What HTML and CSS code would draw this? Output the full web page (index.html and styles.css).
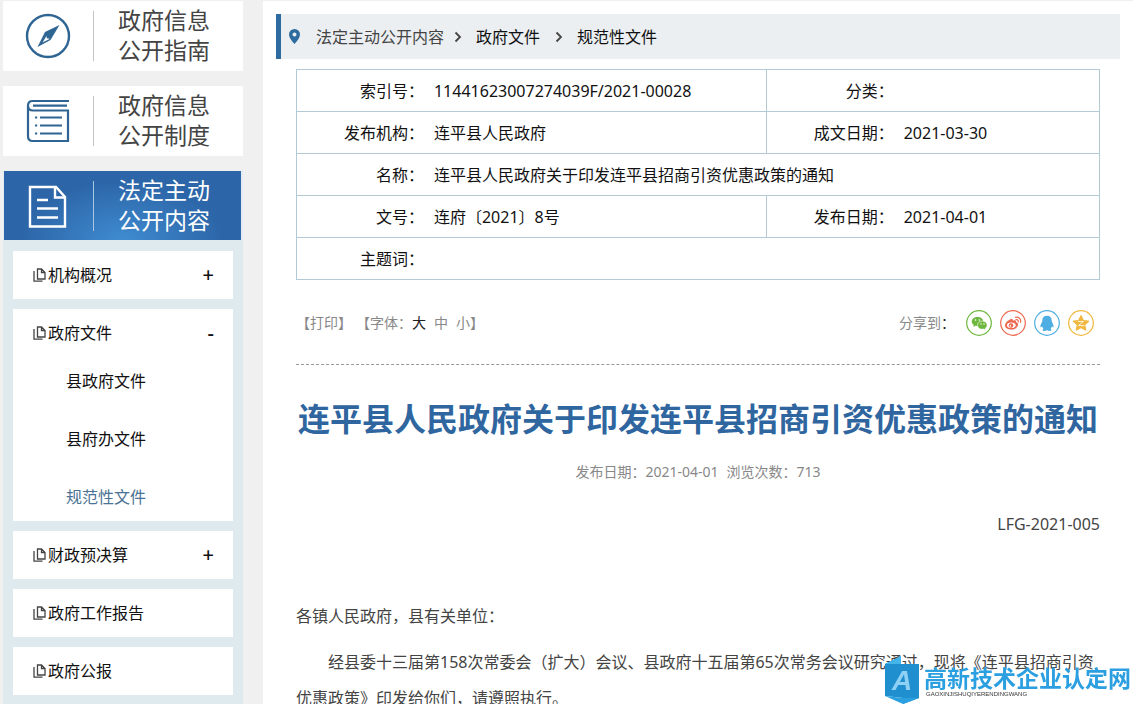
FILE: index.html
```
<!DOCTYPE html>
<html lang="zh-CN">
<head>
<meta charset="utf-8">
<meta name="viewport" content="width=device-width, initial-scale=1">
<title>连平县人民政府关于印发连平县招商引资优惠政策的通知</title>
<link rel="stylesheet" href="styles.css">
</head>
<body>
<svg class="defs" aria-hidden="true">
  <symbol id="pages" viewBox="0 0 13 14">
    <path d="M4.500 1h4L12 4.500V11H4.500zM8.500 1v3.500H12M1 3v10.200h8.500" fill="none" stroke="#444" stroke-width="1.300"/>
  </symbol>
  <symbol id="chevron" viewBox="0 0 8 12">
    <path d="M1.500 1.500 6 6l-4.500 4.500" fill="none" stroke="#444" stroke-width="1.800"/>
  </symbol>
</svg>
<div class="page">
  <aside class="sidebar">
    <a class="card" href="#">
      <span class="card-icon">
        <svg width="46" height="46" viewBox="0 0 46 46">
          <circle cx="23" cy="23" r="21" fill="none" stroke="#2f6593" stroke-width="2.400"/>
          <path d="M34.500 12 25.500 27 12.500 34 20 19z" fill="#2f6593"/>
          <path d="M17.500 29.500 21.500 23l3 3z" fill="#fff"/>
          <circle cx="23" cy="24" r="1.500" fill="#2f6593"/>
        </svg>
      </span>
      <span class="card-text">政府信息<br>公开指南</span>
    </a>
    <a class="card" href="#">
      <span class="card-icon">
        <svg width="46" height="46" viewBox="0 0 46 46" fill="none" stroke="#2f6593" stroke-width="2.200">
          <path d="M44 3H7.500C4.500 3 3 4.800 3 7.500V38c0 3.500 1.500 5 4.500 5H43V12.500H8C4.500 12.500 3 11 3 7.500"/>
          <path d="M8 7.700h34M15 19.500h22M15 27.500h22M15 35.500h22M10 19.500h2.200M10 27.500h2.200M10 35.500h2.200"/>
        </svg>
      </span>
      <span class="card-text">政府信息<br>公开制度</span>
    </a>
    <a class="card card-active" href="#">
      <span class="card-icon">
        <svg width="46" height="46" viewBox="0 0 46 46" fill="none" stroke="#fff" stroke-width="2.400">
          <path d="M5 4h26l9 10v29.500H5z"/>
          <path d="M30 4v10.500h10M12 17h11M12 25.500h21M12 34.500h21"/>
        </svg>
      </span>
      <span class="card-text">法定主动<br>公开内容</span>
    </a>
    <nav class="menu">
      <section class="menu-box">
        <button class="menu-head"><svg width="13" height="14"><use href="#pages"/></svg><span>机构概况</span><b class="sign">+</b></button>
      </section>
      <section class="menu-box">
        <button class="menu-head"><svg width="13" height="14"><use href="#pages"/></svg><span>政府文件</span><b class="sign">-</b></button>
        <div class="submenu">
          <a href="#">县政府文件</a>
          <a href="#">县府办文件</a>
          <a class="current" href="#">规范性文件</a>
        </div>
      </section>
      <section class="menu-box">
        <button class="menu-head"><svg width="13" height="14"><use href="#pages"/></svg><span>财政预决算</span><b class="sign">+</b></button>
      </section>
      <section class="menu-box">
        <a class="menu-head" href="#"><svg width="13" height="14"><use href="#pages"/></svg><span>政府工作报告</span></a>
      </section>
      <section class="menu-box">
        <a class="menu-head" href="#"><svg width="13" height="14"><use href="#pages"/></svg><span>政府公报</span></a>
      </section>
    </nav>
  </aside>
  <main class="main">
    <nav class="crumbs">
      <svg class="pin" width="11" height="15" viewBox="0 0 11 15"><path d="M5.500 0A5.500 5.500 0 0 0 0 5.500C0 9.500 5.500 15 5.500 15S11 9.500 11 5.500A5.500 5.500 0 0 0 5.500 0zm0 7.500a2 2 0 1 1 0-4 2 2 0 0 1 0 4z" fill="#2e6b9e"/></svg>
      <a class="root" href="#">法定主动公开内容</a>
      <svg class="sep" width="8" height="12"><use href="#chevron"/></svg>
      <a href="#">政府文件</a>
      <svg class="sep" width="8" height="12"><use href="#chevron"/></svg>
      <a href="#">规范性文件</a>
    </nav>
    <div class="content">
      <table class="info">
        <colgroup><col class="c-label"><col class="c-value"><col class="c-label"><col></colgroup>
        <tr><th scope="row">索引号：</th><td>11441623007274039F/2021-00028</td><th scope="row" class="split">分类：</th><td></td></tr>
        <tr><th scope="row">发布机构：</th><td>连平县人民政府</td><th scope="row" class="split">成文日期：</th><td>2021-03-30</td></tr>
        <tr><th scope="row">名称：</th><td colspan="3">连平县人民政府关于印发连平县招商引资优惠政策的通知</td></tr>
        <tr><th scope="row">文号：</th><td>连府〔2021〕8号</td><th scope="row" class="split">发布日期：</th><td>2021-04-01</td></tr>
        <tr><th scope="row">主题词：</th><td colspan="3"></td></tr>
      </table>
      <div class="tools">
        <div class="tool-left">
          <button>【打印】</button>
          <div class="sizes"><span>【字体：</span><button class="on">大</button><button>中</button><button>小</button><span>】</span></div>
        </div>
        <div class="share">
          <span class="share-label">分享到<i>：</i></span>
          <a href="#" aria-label="微信"><svg width="26" height="26" viewBox="0 0 26 26">
            <circle cx="13" cy="13" r="12.300" fill="#fff" stroke="#6fb83f" stroke-width="1.200"/>
            <path d="M11.500 7C8.200 7 5.700 9 5.700 11.600c0 1.500.8 2.700 2.100 3.500L7.300 17l2.300-1.200c4.500 1 7.700-1.200 7.700-4.200C17.300 9 14.800 7 11.500 7z" fill="#6fb83f"/>
            <path d="M16.400 11c-2.900 0-4.900 1.800-4.900 4.200 0 2.800 2.900 4.600 6.200 3.900l2 1.100-.5-1.800c1.200-.8 1.900-1.900 1.900-3.200 0-2.400-2-4.200-4.700-4.200z" fill="#6fb83f" stroke="#fff" stroke-width=".6"/>
            <g fill="#fff"><circle cx="9.500" cy="10" r=".8"/><circle cx="13.400" cy="10" r=".8"/><circle cx="15" cy="14" r=".7"/><circle cx="18" cy="14" r=".7"/></g>
          </svg></a>
          <a href="#" aria-label="微博"><svg width="26" height="26" viewBox="0 0 26 26">
            <circle cx="13" cy="13" r="12.300" fill="#fff" stroke="#ec6a50" stroke-width="1.200"/>
            <path d="M10.500 9.300c1.600-.7 2.600-.1 2.300 1.400 2-.8 3.600-.3 3.200 1.300 1.500.5 2.300 1.400 2.100 2.600-.4 3-3.500 5-7 5-3.300 0-6.100-1.600-6.100-4 0-2.300 2.700-5.200 5.500-6.300z" fill="#ec6a50"/>
            <ellipse cx="11.300" cy="15.300" rx="4.300" ry="2.800" fill="#fff"/>
            <circle cx="11" cy="15.500" r="2.300" fill="#ec6a50"/><circle cx="10.400" cy="15.900" r=".8" fill="#fff"/>
            <path d="M15.500 7.300c3.200-.8 5.800 1.700 5 5M16 9.700c1.500-.3 2.600.7 2.300 2.100" fill="none" stroke="#ec6a50" stroke-width="1.200" stroke-linecap="round"/>
          </svg></a>
          <a href="#" aria-label="QQ"><svg width="26" height="26" viewBox="0 0 26 26">
            <circle cx="13" cy="13" r="12.300" fill="#fff" stroke="#4eaee3" stroke-width="1.200"/>
            <path d="M13 5.700c-3 0-4.700 2-4.700 4.700 0 .7-.1 1.200-.4 1.800-.9 1.700-1.700 3.300-1.500 4.700.1.800.7.600 1.600-.6.200 1 .7 1.800 1.400 2.500-1.300.7-1 2.200.7 2.200 1.100 0 2-.2 2.900-.8.900.6 1.800.8 2.900.8 1.700 0 2-1.500.7-2.200.7-.7 1.200-1.500 1.400-2.500.9 1.200 1.500 1.400 1.600.6.200-1.400-.6-3-1.500-4.700-.3-.6-.4-1.100-.4-1.800 0-2.700-1.700-4.700-4.700-4.700z" fill="#4eaee3"/>
          </svg></a>
          <a href="#" aria-label="QQ空间"><svg width="26" height="26" viewBox="0 0 26 26">
            <circle cx="13" cy="13" r="12.300" fill="#fff" stroke="#f0b840" stroke-width="1.200"/>
            <path d="m13 5.800 2.200 4.800 5.300.6-3.900 3.600 1 5.200-4.600-2.600L8.400 20l1-5.200-3.900-3.600 5.300-.6z" fill="#f0b840" stroke="#f0b840" stroke-width="1.400" stroke-linejoin="round"/>
            <path d="M10 11.500h5.500l-5 4 6 .2" fill="none" stroke="#fff" stroke-width=".8"/>
          </svg></a>
        </div>
      </div>
      <article>
        <h1>连平县人民政府关于印发连平县招商引资优惠政策的通知</h1>
        <p class="meta"><span>发布日期：2021-04-01</span><span>浏览次数：713</span></p>
        <p class="docno">LFG-2021-005</p>
        <p class="greeting">各镇人民政府，县有关单位：</p>
        <p class="para">经县委十三届第158次常委会（扩大）会议、县政府十五届第65次常务会议研究通过，现将《连平县招商引资优惠政策》印发给你们，请遵照执行。</p>
      </article>
    </div>
  </main>
</div>
<div class="brand">
  <svg width="35" height="50" viewBox="0 0 35 50">
    <path d="M0 10 16 2v8h18v34l-16 6v-6L0 42z" fill="#1f8fd0"/>
    <path d="M0 10 16 2v8z" fill="#45b4ea"/>
    <path d="M0 42 18 44h16l-16 6z" fill="#2ba0de"/>
    <text class="brand-letter" x="17" y="36" text-anchor="middle">A</text>
  </svg>
  <div class="brand-text"><strong>高新技术企业认定网</strong><small>GAOXINJISHUQIYERENDINGWANG</small></div>
</div>
</body>
</html>
```
FILE: styles.css
```
* { box-sizing: border-box; }
html { overflow: hidden; }
body {
  margin: 0;
  height: 100vh;
  overflow: hidden;
  background: #f1f0f1;
  color: #111;
  font: 16px/24px "Noto Sans", "Noto Sans CJK SC", sans-serif;
}
a { color: inherit; text-decoration: none; }
button { padding: 0; border: 0; background: none; color: inherit; font: inherit; cursor: pointer; }
svg { display: block; flex: none; }
p, h1 { margin: 0; }
.defs { position: absolute; width: 0; height: 0; }

.page { display: flex; min-height: 100vh; padding-top: 1px; }

.sidebar { flex: none; width: 263px; padding: 0 20px 0 3px; }
.card {
  display: flex;
  align-items: center;
  height: 70px;
  margin-bottom: 15px;
  background: #fff;
  color: #444;
}
.card-icon {
  display: flex;
  align-items: center;
  width: 91px;
  height: 50px;
  padding-left: 22px;
  border-right: 1px solid #c4c4c4;
}
.card-text { padding: 0 0 2px 24px; font-size: 23px; line-height: 30px; }
.card-active {
  height: 69px;
  margin: 0;
  border: solid #e3ecf2;
  border-width: 0 2px 0 1px;
  background: radial-gradient(ellipse at 50% 100%, #3f8bd0 0%, #2c66a8 60%);
  color: #fff;
}
.card-active .card-icon { width: 90px; padding-left: 21px; border-color: #a9c6e4; }

.menu { display: grid; gap: 10px; padding: 11px 10px 10px; background: #deeaee; }
.menu-box { background: #fff; }
.menu-head {
  display: flex;
  align-items: center;
  gap: 2px;
  width: 100%;
  height: 48px;
  padding: 0 19px 0 20px;
}
.sign { margin-left: auto; font-size: 20px; font-weight: 500; }
.submenu { display: grid; gap: 10px; }
.submenu a { padding-left: 53px; line-height: 48px; }
.submenu .current { color: #4b7395; }

.main { flex: 1; min-width: 0; padding: 13px 13px 0; background: #fff; }
.crumbs {
  display: flex;
  align-items: center;
  height: 45px;
  padding-left: 8px;
  border-left: 5px solid #2e6b9e;
  background: #ebeff2;
}
.crumbs .root { padding-left: 16px; color: #444; }
.sep { margin: 0 14px 0 15px; }
.root + .sep { margin-left: 10px; }

.content { padding: 10px 20px 0; }
.info {
  width: 100%;
  border: 1px solid #b3c9d6;
  border-collapse: collapse;
  table-layout: fixed;
}
.c-label { width: 16%; }
.c-value { width: 42.5%; }
.info tr { height: 42px; border-bottom: 1px solid #b3c9d6; }
.info th { padding: 0 1px 0 0; font-weight: 400; text-align: right; }
.info td { padding: 0 0 0 9px; }
.info .split { border-left: 1px solid #b3c9d6; }

.tools {
  display: flex;
  justify-content: space-between;
  align-items: center;
  height: 85px;
  padding-top: 2px;
  border-bottom: 1px dashed #999;
  color: #888;
  font-size: 14px;
}
.tool-left, .sizes { display: flex; }
.tool-left { gap: 4px; }
.sizes { gap: 8px; }
.sizes span:first-child { margin-right: -8px; }
.sizes span:last-child { margin-left: -8px; }
.sizes .on { color: #222; }
.share { display: flex; align-items: center; gap: 8px; padding-right: 6px; }
.share-label { margin-right: 3px; }
.share-label i { color: #222; font-style: normal; }

h1 { padding-top: 30px; color: #2f66a0; font-size: 32px; line-height: 48px; font-weight: 700; text-align: center; }
.meta { display: flex; justify-content: center; gap: 8px; padding-top: 17px; color: #888; font-size: 14px; }
.docno { padding-top: 28px; color: #444; text-align: right; }
.greeting { padding-top: 68px; color: #444; }
.para { padding-top: 16px; color: #444; line-height: 36px; text-indent: 2em; }

.brand { position: fixed; right: 2px; bottom: 0; display: flex; align-items: flex-end; gap: 4px; }
.brand-letter { fill: #8fd0f5; font: italic 700 28px "Liberation Sans", sans-serif; }
.brand-text { display: grid; padding-bottom: 6px; color: #2b9fe0; }
.brand-text strong { font-size: 23px; line-height: 24px; font-weight: 700; }
.brand-text small { padding-left: 2px; color: #333; font: 6px/8px "Liberation Sans", sans-serif; }
```
